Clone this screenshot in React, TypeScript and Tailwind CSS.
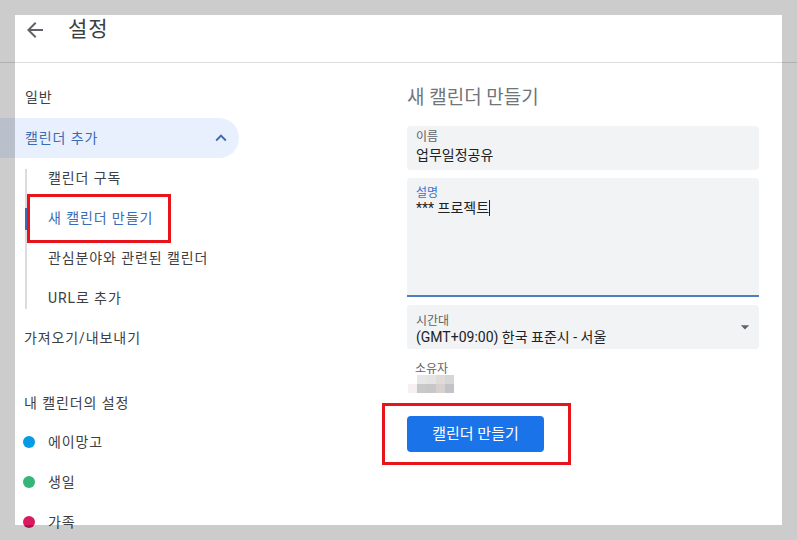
import React from "react";

const SUB_ITEMS = ["캘린더 구독", "새 캘린더 만들기", "관심분야와 관련된 캘린더", "URL로 추가"];

const MY_CALENDARS = [
  { name: "에이망고", color: "bg-[#039be5]" },
  { name: "생일", color: "bg-[#33b679]" },
  { name: "가족", color: "bg-[#d81b60]" },
];

// blurred owner e-mail, drawn as a little mosaic
const MOSAIC = [
  "bg-[#ffffff]", "bg-[#e7e7e7]", "bg-[#e4e4e4]", "bg-[#dfdbd9]", "bg-[#d6d6d8]",
  "bg-[#f7f0f0]", "bg-[#c9c9c9]", "bg-[#c7c7c7]", "bg-[#d6d1ce]", "bg-[#c3c3c7]",
];

export default function App() {
  return (
    <div className="relative w-[797px] h-[540px] overflow-hidden bg-white font-['Roboto','Noto_Sans_CJK_KR',sans-serif] text-[#3c4043]">
      {/* header */}
      <div className="h-[63px] border-b border-[#dadce0] flex items-center pl-[23px] pb-[2px]">
        <svg viewBox="0 0 24 24" className="w-6 h-6 fill-[#5f6368]">
          <path d="M20 11H7.83l5.59-5.59L12 4l-8 8 8 8 1.41-1.41L7.83 13H20v-2z" />
        </svg>
        <span className="ml-[21px] text-[21px] text-[#3c4043] tracking-[1px]">설정</span>
      </div>

      <div className="flex">
        {/* sidebar */}
        <div className="w-[383px] pt-[14px] text-[14px] tracking-[0.9px]">
          <div className="h-10 flex items-center pl-[25px]">일반</div>
          <div className="mt-px h-10 w-[239px] rounded-r-full bg-[#e8f0fe] flex items-center pl-[25px] pr-[7px] text-[#3b6bb5]">
            <span>캘린더 추가</span>
            <svg viewBox="0 0 24 24" className="ml-auto w-[22px] h-[22px] fill-[#3b6bb5]">
              <path d="M12 8l-6 6 1.41 1.41L12 10.83l4.59 4.58L18 14z" />
            </svg>
          </div>
          <div className="relative">
            <div className="absolute left-[25px] top-[11px] bottom-[9px] w-[1.5px] bg-[#dadce0]" />
            {SUB_ITEMS.map((item, i) => (
              <div key={item} className={`relative h-10 flex items-center pl-[48px] ${i === 1 ? "text-[#3b6bb5]" : ""}`}>
                {i === 1 && <div className="absolute left-[25px] top-[10px] h-[22px] w-[3px] bg-[#3b6bb5]" />}
                {item}
              </div>
            ))}
          </div>
          <div className="h-10 flex items-center pl-[24px]">가져오기/내보내기</div>
          <div className="mt-[25px] h-10 flex items-center pl-[24px]">내 캘린더의 설정</div>
          {MY_CALENDARS.map((c, i) => (
            <div key={c.name} className={`h-10 flex items-center pl-[23px] ${i === 0 ? "-mt-px" : ""}`}>
              <div className="w-3 h-3 rounded-full shrink-0 relative">
                <div className={`absolute inset-0 rounded-full ${c.color}`} />
              </div>
              <span className="ml-[13px]">{c.name}</span>
            </div>
          ))}
        </div>

        {/* form */}
        <div className="w-[352px] ml-[24px]">
          <div className="mt-[20px] h-[30px] leading-[30px] text-[19px] text-[#70757a]">새 캘린더 만들기</div>

          <div className="mt-[13px] h-[44px] rounded bg-[#f1f3f4] px-[9px] pt-[4px]">
            <div className="text-[12px] leading-[14px] text-[#5f6368]">이름</div>
            <div className="mt-px text-[14px] leading-[20px] text-[#202124]">업무일정공유</div>
          </div>

          <div className="mt-[8px] h-[119px] rounded-t bg-[#f1f3f4] border-b-2 border-[#4a7fc0] px-[9px] pt-[8px]">
            <div className="text-[12px] leading-[14px] text-[#3b74c7]">설명</div>
            <div className="text-[14px] leading-[16px] text-[#202124] flex items-center">
              *** 프로젝트
              <span className="inline-block w-px h-[16px] bg-[#202124]" />
            </div>
          </div>

          <div className="mt-[8px] h-[44px] rounded bg-[#f1f3f4] pl-[9px] pr-[4px] pt-[9px] flex items-start">
            <div>
              <div className="text-[12px] leading-[14px] text-[#5f6368]">시간대</div>
              <div className="text-[14px] leading-[18px] text-[#202124]">(GMT+09:00) 한국 표준시 - 서울</div>
            </div>
            <svg viewBox="0 0 24 24" className="ml-auto mt-[3px] w-5 h-5 fill-[#5f6368]">
              <path d="M7 10l5 5 5-5z" />
            </svg>
          </div>

          <div className="mt-[13px] pl-[8px] text-[12px] leading-[14px] text-[#5f6368]">소유자</div>
          <div className="-mt-px ml-px grid grid-cols-5 w-[46px]">
            {MOSAIC.map((c, i) => (
              <div key={i} className={`h-[9px] ${c}`} />
            ))}
          </div>

          <button className="mt-[23px] w-[137px] h-[36px] rounded bg-[#1a73e8] text-white text-[15px]">
            캘린더 만들기
          </button>
        </div>
      </div>

      {/* annotation boxes */}
      <div className="absolute left-[27px] top-[194px] w-[144px] h-[49px] border-[3px] border-[#e8141b]" />
      <div className="absolute left-[382px] top-[403px] w-[189px] h-[62px] border-[3px] border-[#e8141b]" />

      {/* dimmed frame */}
      <div className="absolute left-0 top-0 w-[797px] h-[15px] bg-black/20" />
      <div className="absolute left-0 top-[525px] w-[797px] h-[15px] bg-black/20" />
      <div className="absolute left-0 top-[15px] w-[15px] h-[510px] bg-black/20" />
      <div className="absolute left-[782px] top-[15px] w-[15px] h-[510px] bg-black/20" />
    </div>
  );
}
